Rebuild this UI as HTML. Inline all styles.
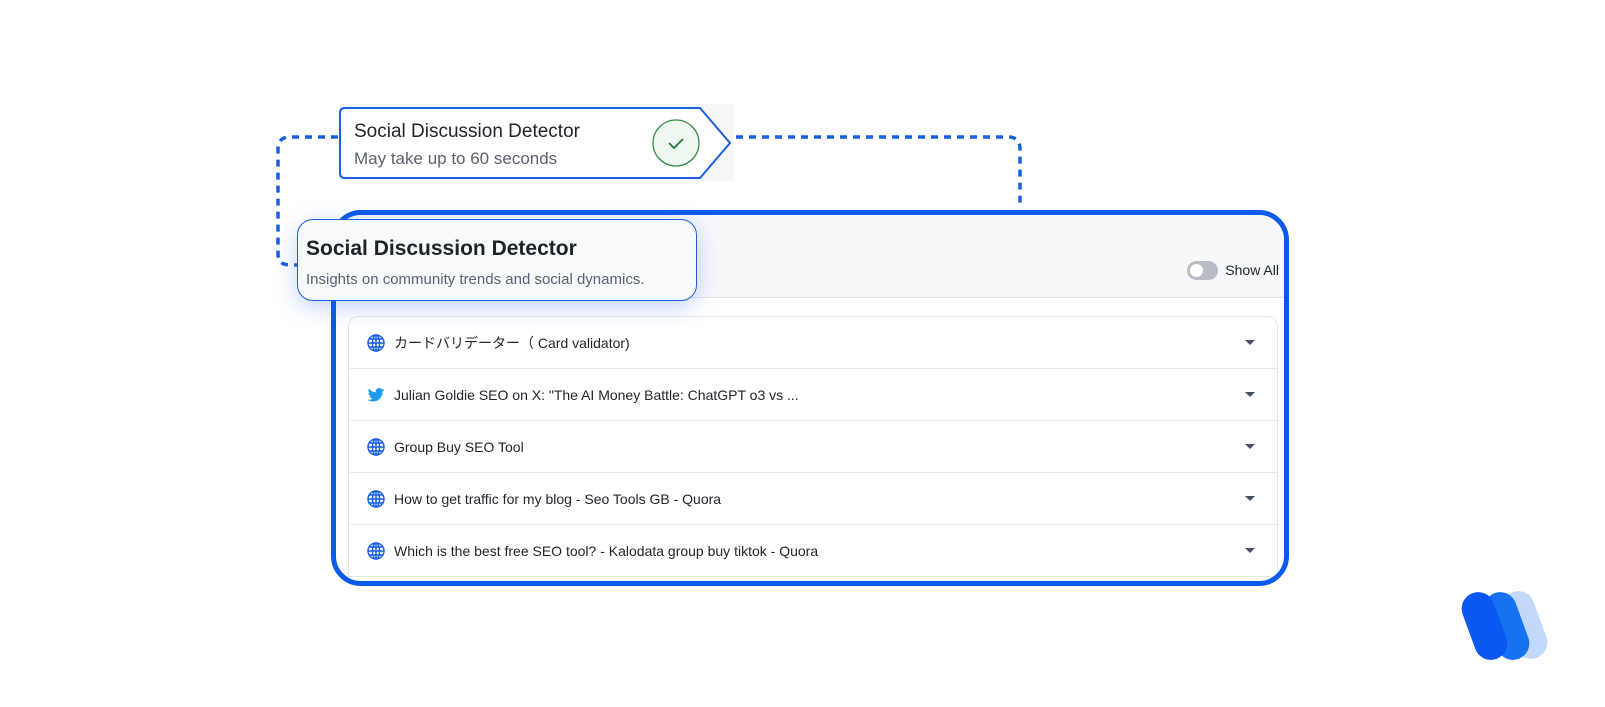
<!DOCTYPE html>
<html><head><meta charset="utf-8"><style>
body{margin:0;width:1605px;height:707px;background:#fff;position:relative;overflow:hidden;font-family:"Liberation Sans","Noto Sans CJK JP",sans-serif;}
.abs{position:absolute}
.panel{left:331px;top:210px;width:948px;height:366px;border:5px solid #0c5ae9;border-radius:30px;background:#fff;overflow:hidden}
.hdr{position:absolute;left:0;top:0;right:0;height:82px;background:#f7f8fa;border-bottom:1px solid #e3e6ea}
.list{position:absolute;left:12px;top:101px;width:928px;height:270px;border:1px solid #e3e6ea;border-radius:10px;background:#fff}
.row{height:51px;border-bottom:1px solid #e3e6ea;display:flex;align-items:center;font-size:14px;color:#1f2329;position:relative}
.row svg.g{margin-left:18px;margin-right:9px}
.caret{position:absolute;right:22px;top:23px;width:0;height:0;border-left:5px solid transparent;border-right:5px solid transparent;border-top:5px solid #4a5060}
.toggle{position:absolute;right:66px;top:46px;width:31px;height:19px;border-radius:10px;background:#b9bcc2}
.toggle:after{content:"";position:absolute;left:3px;top:3px;width:13px;height:13px;border-radius:50%;background:#fff}
.pill{position:absolute;width:33px;height:70px;border-radius:17px;transform:rotate(-20deg)}
</style></head><body>
<svg class="abs" style="left:0;top:0" width="1605" height="707">
<path d="M338 137 H290 Q278 137 278 149 V254 Q278 265 290 265 H297" fill="none" stroke="#1a5fe0" stroke-width="3.5" stroke-dasharray="7 6"/>
<path d="M736 137 H1008 Q1020 137 1020 149 V208" fill="none" stroke="#1a5fe0" stroke-width="3.5" stroke-dasharray="7 6"/>
<rect x="339" y="104" width="395" height="77" fill="#f5f6f8"/>
<path d="M345 108 H700 L730 143 L700 178 H345 Q340 178 340 173 V113 Q340 108 345 108 Z" fill="#fff" stroke="#1a5fe0" stroke-width="2"/>
<circle cx="676" cy="143" r="23" fill="#eef7f0" stroke="#2e8b47" stroke-width="1.3"/>
<path d="M669 143 l5 5 l9 -9" fill="none" stroke="#1f7a3a" stroke-width="1.8"/>
<text x="354" y="137" font-size="19" fill="#1f2329" font-family="Liberation Sans">Social Discussion Detector</text>
<text x="354" y="164" font-size="17" fill="#5b6170" font-family="Liberation Sans">May take up to 60 seconds</text>
</svg>
<div class="abs panel">
<div class="hdr"><div class="toggle"></div><div class="abs" style="right:5px;top:47px;font-size:14px;color:#1f2329">Show All</div></div>
<div class="list">
<div class="row"><svg class="g" width="18" height="18" viewBox="0 0 18 18"><g fill="none" stroke="#1a5fe0" stroke-width="1.5"><circle cx="9" cy="9" r="8"/><ellipse cx="9" cy="9" rx="3.5" ry="8"/><path d="M1 9h16M2.5 5h13M2.5 13h13M9 1v16"/></g></svg>カードバリデーター（ Card validator)<div class="caret"></div></div>
<div class="row"><svg class="g" width="18" height="18" viewBox="0 0 24 24"><path fill="#1d9bf0" d="M23 5c-.8.4-1.7.6-2.6.7.9-.6 1.6-1.4 2-2.5-.9.5-1.900.9-2.9 1.1A4.5 4.5 0 0 0 11.8 8.4 12.8 12.8 0 0 1 2.5 3.7a4.5 4.5 0 0 0 1.4 6c-.7 0-1.400-.2-2-.6 0 2.2 1.6 4 3.6 4.4-.7.2-1.4.2-2 .1.6 1.8 2.2 3.1 4.2 3.1A9 9 0 0 1 1 18.6 12.8 12.8 0 0 0 7.9 20.6c8.3 0 12.8-6.9 12.8-12.8v-.6c.9-.6 1.6-1.4 2.3-2.2z"/></svg>Julian Goldie SEO on X: "The AI Money Battle: ChatGPT o3 vs ...<div class="caret"></div></div>
<div class="row"><svg class="g" width="18" height="18" viewBox="0 0 18 18"><g fill="none" stroke="#1a5fe0" stroke-width="1.5"><circle cx="9" cy="9" r="8"/><ellipse cx="9" cy="9" rx="3.5" ry="8"/><path d="M1 9h16M2.5 5h13M2.5 13h13M9 1v16"/></g></svg>Group Buy SEO Tool<div class="caret"></div></div>
<div class="row"><svg class="g" width="18" height="18" viewBox="0 0 18 18"><g fill="none" stroke="#1a5fe0" stroke-width="1.5"><circle cx="9" cy="9" r="8"/><ellipse cx="9" cy="9" rx="3.5" ry="8"/><path d="M1 9h16M2.5 5h13M2.5 13h13M9 1v16"/></g></svg>How to get traffic for my blog - Seo Tools GB - Quora<div class="caret"></div></div>
<div class="row"><svg class="g" width="18" height="18" viewBox="0 0 18 18"><g fill="none" stroke="#1a5fe0" stroke-width="1.5"><circle cx="9" cy="9" r="8"/><ellipse cx="9" cy="9" rx="3.5" ry="8"/><path d="M1 9h16M2.5 5h13M2.5 13h13M9 1v16"/></g></svg>Which is the best free SEO tool? - Kalodata group buy tiktok - Quora<div class="caret"></div></div>
</div>
</div>
<div class="abs" style="left:297px;top:219px;width:398px;height:80px;border:1.5px solid #1a5fe0;border-radius:16px;background:#f8fafc;box-shadow:0 6px 24px rgba(40,100,240,0.28)">
<div class="abs" style="left:8px;top:17px;font-size:21px;font-weight:bold;color:#1f2329">Social Discussion Detector</div>
<div class="abs" style="left:8px;top:51px;font-size:15px;color:#5b6170">Insights on community trends and social dynamics.</div>
</div>
<div class="pill" style="left:1508px;top:590px;background:#c3d9fb"></div>
<div class="pill" style="left:1490px;top:591px;background:#1672f0"></div>
<div class="pill" style="left:1468px;top:591px;background:#0a58ef"></div>
</body></html>
